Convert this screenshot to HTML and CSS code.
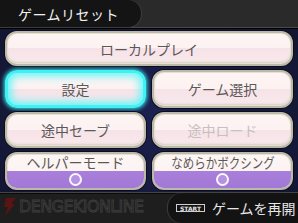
FILE: index.html
```html
<!DOCTYPE html>
<html lang="ja">
<head>
<meta charset="utf-8">
<link rel="stylesheet" href="styles.css">
</head>
<body>
<div class="screen">
  <header class="top">
    <div class="title">ゲームリセット</div>
  </header>
  <main class="menu">
    <div class="btn wide"><span class="lbl">ローカルプレイ</span></div>
    <div class="btn selected"><span class="lbl">設定</span></div>
    <div class="btn"><span class="lbl">ゲーム選択</span></div>
    <div class="btn"><span class="lbl">途中セーブ</span></div>
    <div class="btn disabled"><span class="lbl">途中ロード</span></div>
    <div class="btn toggle"><span class="lbl">ヘルパーモード</span><span class="state"><i class="dot"></i></span></div>
    <div class="btn toggle"><span class="lbl narrow">なめらかボクシング</span><span class="state"><i class="dot"></i></span></div>
  </main>
  <footer class="bottom">
    <div class="mark">
      <svg class="bolt" width="15" height="20" viewBox="0 0 15 20"><path d="M4 1 H14 L9 7 H13 L3 19 L6 10 H2 Z" fill="#5b1414"/></svg>
      <span class="wm">DENGEKIONLINE</span>
    </div>
    <div class="resume">
      <span class="start">START</span>
      <span class="resume-txt">ゲームを再開</span>
    </div>
  </footer>
</div>
</body>
</html>
```
FILE: styles.css
```css
* { box-sizing: border-box; }
html, body { margin: 0; padding: 0; }
body {
  width: 298px; height: 223px; overflow: hidden;
  background: #161a3c;
  font-family: "Noto Sans CJK JP", "Noto Sans", sans-serif;
}
.screen {
  width: 298px; height: 223px;
  display: flex; flex-direction: column;
  background: radial-gradient(ellipse at 50% 50%, #1c2150 0%, #151938 70%, #10132c 100%);
}
.top {
  height: 28px; flex: none;
  background: #2a2a2a;
  border-bottom: 1px solid #4a4a4a;
  box-shadow: 0 1px 0 #000;
  display: flex;
}
.title {
  width: 141px; height: 27px;
  background: #141414;
  border-radius: 0 13px 13px 0;
  box-shadow: 1px 0 0 #3c3c3c, 0 1px 0 #3c3c3c;
  color: #f2f2f2;
  font-size: 14px; line-height: 28px;
  padding-left: 18px;
  letter-spacing: 0.5px;
}
.menu {
  flex: none;
  display: grid;
  grid-template-columns: 1fr 1fr;
  grid-template-rows: 35px 38px 36px 38px;
  column-gap: 6px; row-gap: 4px;
  padding: 3px 5px 0 5px;
  height: 164px;
}
.btn {
  position: relative;
  border-radius: 12px;
  border: 2px solid #bdb9a8;
  background: linear-gradient(#fdf4f4 0, #fdf2f2 50%, #f6e3e8 50%, #f8e8ec 100%);
  box-shadow: inset 0 0 0 1px #e4e0d2, inset 0 -2px 2px #d8d2c2, 0 0 0 1px #0c0e20;
  display: flex; align-items: center; justify-content: center;
  color: #5b5858;
  font-size: 14px;
  overflow: hidden;
}
.wide { grid-column: 1 / span 2; }
.lbl { white-space: nowrap; }
.selected {
  border: 3px solid #3ef2f4;
  box-shadow: 0 0 4px 1px #38e8f0, inset 0 0 8px 3px #5cf6f8;
}
.disabled { color: #c8bfc0; }
.toggle {
  flex-direction: column;
  justify-content: flex-start;
  background: linear-gradient(#fdf6f4, #fbf1ef);
}
.toggle .lbl {
  height: 17px; line-height: 17px;
  font-size: 14px;
}
.toggle .lbl.narrow { transform: scaleX(0.82); }
.state {
  flex: 1; align-self: stretch;
  background: linear-gradient(#a87fdb, #a278d6);
  display: flex; align-items: center; justify-content: center;
}
.dot {
  width: 13px; height: 13px; border-radius: 50%;
  border: 2px solid #fbf6fb;
  background: #b592e4;
}
.bottom {
  flex: 1;
  position: relative;
  background: #1e1e1e;
  border-top: 1px solid #444;
  box-shadow: inset 0 1px 0 #0a0a0a;
  overflow: hidden;
}
.mark {
  display: flex; align-items: center; gap: 2px;
  padding-left: 2px;
  width: 168px;
  overflow: hidden;
  margin-top: 4px;
}
.bolt { flex: none; }
.wm {
  font-family: "DejaVu Sans", sans-serif;
  font-size: 16px;
  letter-spacing: -0.6px;
  color: #222;
  -webkit-text-stroke: 0.8px #3e3e3e;
  line-height: 18px;
  white-space: nowrap;
}
.resume {
  position: absolute; right: 0; top: 0; bottom: 0;
  width: 130px;
  background: #131313;
  border-radius: 14px 0 0 14px;
  box-shadow: -1px 0 0 #3c3c3c;
  display: flex; align-items: center; gap: 7px;
  padding-left: 8px;
  white-space: nowrap;
}
.start {
  flex: none;
  width: 29px;
  text-align: center;
  font-family: "DejaVu Sans", sans-serif;
  font-size: 6px; font-weight: bold;
  color: #e8e8e8;
  border: 1px solid #cfcfcf;
  height: 8px; line-height: 7px;
}
.resume-txt {
  color: #e6e6e6; font-size: 14px;
  white-space: nowrap;
}
```
